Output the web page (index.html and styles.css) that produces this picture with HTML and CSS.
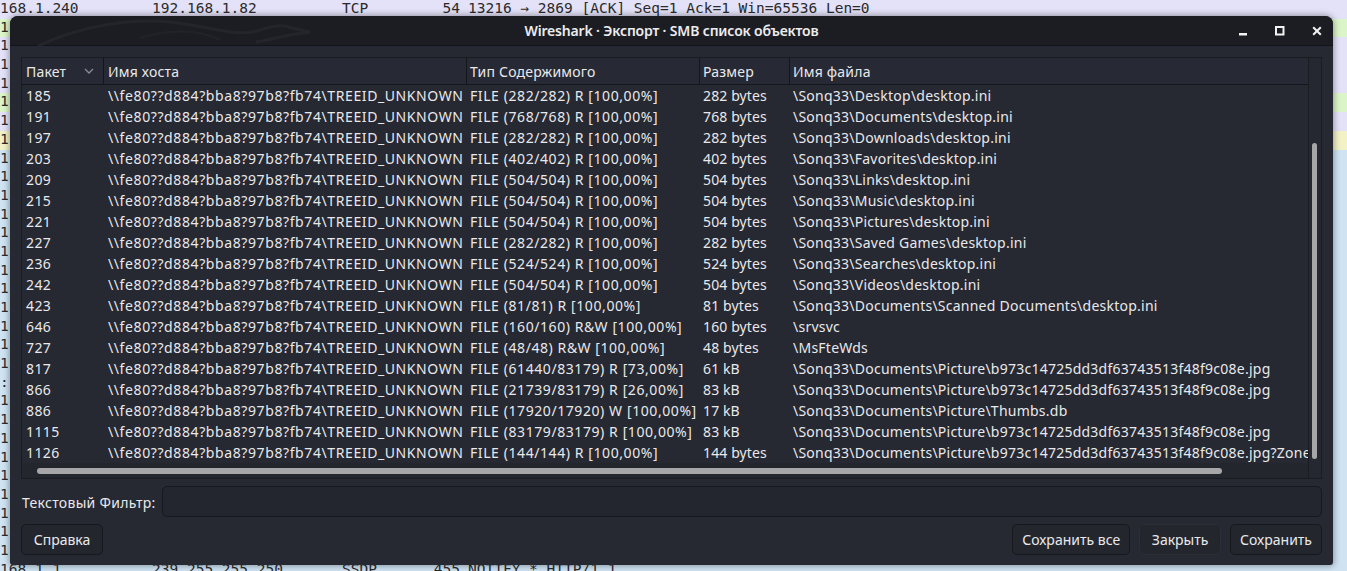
FILE: index.html
```html
<!DOCTYPE html>
<html lang="ru">
<head>
<meta charset="utf-8">
<title>Wireshark · Экспорт · SMB список объектов</title>
<link rel="stylesheet" href="styles.css">
</head>
<body>
<div class="pktlist">
  <div class="pkt lav"><span class="c1">168.1.240</span><span class="c2">192.168.1.82</span><span class="c3">TCP</span><span class="c4">54</span><span class="c5">13216 → 2869 [ACK] Seq=1 Ack=1 Win=65536 Len=0</span></div>
  <div class="pkt grn"><span class="c1">1</span></div>
  <div class="pkt lav"><span class="c1">1</span></div>
  <div class="pkt lav"><span class="c1">1</span></div>
  <div class="pkt lav"><span class="c1">1</span></div>
  <div class="pkt grn"><span class="c1">1</span></div>
  <div class="pkt lav"><span class="c1">1</span></div>
  <div class="pkt yel"><span class="c1">1</span></div>
  <div class="pkt blu"><span class="c1">1</span></div>
  <div class="pkt blu"><span class="c1">1</span></div>
  <div class="pkt blu"><span class="c1">1</span></div>
  <div class="pkt blu"><span class="c1">1</span></div>
  <div class="pkt blu"><span class="c1">1</span></div>
  <div class="pkt blu"><span class="c1">1</span></div>
  <div class="pkt blu"><span class="c1">1</span></div>
  <div class="pkt blu"><span class="c1">1</span></div>
  <div class="pkt blu"><span class="c1">1</span></div>
  <div class="pkt blu"><span class="c1">1</span></div>
  <div class="pkt blu"><span class="c1">1</span></div>
  <div class="pkt blu"><span class="c1">1</span></div>
  <div class="pkt blu"><span class="c1">:</span></div>
  <div class="pkt blu"><span class="c1">1</span></div>
  <div class="pkt blu"><span class="c1">1</span></div>
  <div class="pkt blu"><span class="c1">1</span></div>
  <div class="pkt blu"><span class="c1">1</span></div>
  <div class="pkt blu"><span class="c1">1</span></div>
  <div class="pkt blu"><span class="c1">1</span></div>
  <div class="pkt blu"><span class="c1">1</span></div>
  <div class="pkt blu"><span class="c1">1</span></div>
  <div class="pkt blu"><span class="c1">1</span></div>
  <div class="pkt blu"><span class="c1">168.1.1</span><span class="c2">239.255.255.250</span><span class="c3">SSDP</span><span class="c4">455</span><span class="c5">NOTIFY * HTTP/1.1</span></div>
</div>

<div class="win">
  <div class="titlebar">
    <svg class="dragon" width="320" height="30" viewBox="0 0 320 30"><path d="M18 30 C60 10 110 2 150 6 C190 10 215 22 240 14 C252 10 262 8 272 12 L290 16 L276 18 C262 20 250 24 236 26" fill="none" stroke="#24252b" stroke-width="3"/><path d="M120 22 C150 12 180 14 200 24" fill="none" stroke="#222329" stroke-width="2"/></svg>
    <div class="title">Wireshark · Экспорт · SMB список объектов</div>
    <div class="controls">
      <svg class="ctl" width="14" height="14" viewBox="0 0 14 14"><rect x="3" y="9" width="8" height="2.5" fill="#f2f2f2"/></svg>
      <svg class="ctl" width="14" height="14" viewBox="0 0 14 14"><rect x="3" y="3" width="7.5" height="7.5" fill="none" stroke="#f2f2f2" stroke-width="2"/></svg>
      <svg class="ctl" width="14" height="14" viewBox="0 0 14 14"><path d="M3.2 3.2 L10.8 10.8 M10.8 3.2 L3.2 10.8" stroke="#f2f2f2" stroke-width="2"/></svg>
    </div>
  </div>

  <div class="body">
    <div class="tree">
      <div class="viewport">
        <div class="hdr">
          <div class="h c0">Пакет<svg class="sort" width="10" height="6" viewBox="0 0 10 6"><path d="M1 1 L5 5 L9 1" fill="none" stroke="#8a8c95" stroke-width="1.3"/></svg></div>
          <div class="h c1">Имя хоста</div>
          <div class="h c2">Тип Содержимого</div>
          <div class="h c3">Размер</div>
          <div class="h c4">Имя файла</div>
        </div>
        <div class="rows">
          <div class="row"><div class="c0">185</div><div class="c1">\\fe80??d884?bba8?97b8?fb74\TREEID_UNKNOWN</div><div class="c2">FILE (282/282) R [100,00%]</div><div class="c3">282 bytes</div><div class="c4">\Sonq33\Desktop\desktop.ini</div></div>
          <div class="row"><div class="c0">191</div><div class="c1">\\fe80??d884?bba8?97b8?fb74\TREEID_UNKNOWN</div><div class="c2">FILE (768/768) R [100,00%]</div><div class="c3">768 bytes</div><div class="c4">\Sonq33\Documents\desktop.ini</div></div>
          <div class="row"><div class="c0">197</div><div class="c1">\\fe80??d884?bba8?97b8?fb74\TREEID_UNKNOWN</div><div class="c2">FILE (282/282) R [100,00%]</div><div class="c3">282 bytes</div><div class="c4">\Sonq33\Downloads\desktop.ini</div></div>
          <div class="row"><div class="c0">203</div><div class="c1">\\fe80??d884?bba8?97b8?fb74\TREEID_UNKNOWN</div><div class="c2">FILE (402/402) R [100,00%]</div><div class="c3">402 bytes</div><div class="c4">\Sonq33\Favorites\desktop.ini</div></div>
          <div class="row"><div class="c0">209</div><div class="c1">\\fe80??d884?bba8?97b8?fb74\TREEID_UNKNOWN</div><div class="c2">FILE (504/504) R [100,00%]</div><div class="c3">504 bytes</div><div class="c4">\Sonq33\Links\desktop.ini</div></div>
          <div class="row"><div class="c0">215</div><div class="c1">\\fe80??d884?bba8?97b8?fb74\TREEID_UNKNOWN</div><div class="c2">FILE (504/504) R [100,00%]</div><div class="c3">504 bytes</div><div class="c4">\Sonq33\Music\desktop.ini</div></div>
          <div class="row"><div class="c0">221</div><div class="c1">\\fe80??d884?bba8?97b8?fb74\TREEID_UNKNOWN</div><div class="c2">FILE (504/504) R [100,00%]</div><div class="c3">504 bytes</div><div class="c4">\Sonq33\Pictures\desktop.ini</div></div>
          <div class="row"><div class="c0">227</div><div class="c1">\\fe80??d884?bba8?97b8?fb74\TREEID_UNKNOWN</div><div class="c2">FILE (282/282) R [100,00%]</div><div class="c3">282 bytes</div><div class="c4">\Sonq33\Saved Games\desktop.ini</div></div>
          <div class="row"><div class="c0">236</div><div class="c1">\\fe80??d884?bba8?97b8?fb74\TREEID_UNKNOWN</div><div class="c2">FILE (524/524) R [100,00%]</div><div class="c3">524 bytes</div><div class="c4">\Sonq33\Searches\desktop.ini</div></div>
          <div class="row"><div class="c0">242</div><div class="c1">\\fe80??d884?bba8?97b8?fb74\TREEID_UNKNOWN</div><div class="c2">FILE (504/504) R [100,00%]</div><div class="c3">504 bytes</div><div class="c4">\Sonq33\Videos\desktop.ini</div></div>
          <div class="row"><div class="c0">423</div><div class="c1">\\fe80??d884?bba8?97b8?fb74\TREEID_UNKNOWN</div><div class="c2">FILE (81/81) R [100,00%]</div><div class="c3">81 bytes</div><div class="c4">\Sonq33\Documents\Scanned Documents\desktop.ini</div></div>
          <div class="row"><div class="c0">646</div><div class="c1">\\fe80??d884?bba8?97b8?fb74\TREEID_UNKNOWN</div><div class="c2">FILE (160/160) R&amp;W [100,00%]</div><div class="c3">160 bytes</div><div class="c4">\srvsvc</div></div>
          <div class="row"><div class="c0">727</div><div class="c1">\\fe80??d884?bba8?97b8?fb74\TREEID_UNKNOWN</div><div class="c2">FILE (48/48) R&amp;W [100,00%]</div><div class="c3">48 bytes</div><div class="c4">\MsFteWds</div></div>
          <div class="row"><div class="c0">817</div><div class="c1">\\fe80??d884?bba8?97b8?fb74\TREEID_UNKNOWN</div><div class="c2">FILE (61440/83179) R [73,00%]</div><div class="c3">61 kB</div><div class="c4">\Sonq33\Documents\Picture\b973c14725dd3df63743513f48f9c08e.jpg</div></div>
          <div class="row"><div class="c0">866</div><div class="c1">\\fe80??d884?bba8?97b8?fb74\TREEID_UNKNOWN</div><div class="c2">FILE (21739/83179) R [26,00%]</div><div class="c3">83 kB</div><div class="c4">\Sonq33\Documents\Picture\b973c14725dd3df63743513f48f9c08e.jpg</div></div>
          <div class="row"><div class="c0">886</div><div class="c1">\\fe80??d884?bba8?97b8?fb74\TREEID_UNKNOWN</div><div class="c2">FILE (17920/17920) W [100,00%]</div><div class="c3">17 kB</div><div class="c4">\Sonq33\Documents\Picture\Thumbs.db</div></div>
          <div class="row"><div class="c0">1115</div><div class="c1">\\fe80??d884?bba8?97b8?fb74\TREEID_UNKNOWN</div><div class="c2">FILE (83179/83179) R [100,00%]</div><div class="c3">83 kB</div><div class="c4">\Sonq33\Documents\Picture\b973c14725dd3df63743513f48f9c08e.jpg</div></div>
          <div class="row"><div class="c0">1126</div><div class="c1">\\fe80??d884?bba8?97b8?fb74\TREEID_UNKNOWN</div><div class="c2">FILE (144/144) R [100,00%]</div><div class="c3">144 bytes</div><div class="c4">\Sonq33\Documents\Picture\b973c14725dd3df63743513f48f9c08e.jpg?Zone.Identifier</div></div>
        </div>
        <div class="hscroll"><div class="hthumb"></div></div>
      </div>
      <div class="vscroll"><div class="vthumb"></div></div>
    </div>

    <div class="filter">
      <label class="flabel">Текстовый Фильтр:</label>
      <div class="finput"></div>
    </div>

    <div class="buttons">
      <div class="btn">Справка</div>
      <div class="spacer"></div>
      <div class="btn">Сохранить все</div>
      <div class="btn focus">Закрыть</div>
      <div class="btn">Сохранить</div>
    </div>
  </div>
</div>
</body>
</html>
```

FILE: styles.css
```css
html, body {
  margin: 0;
  padding: 0;
  width: 1347px;
  height: 571px;
  overflow: hidden;
}
body {
  position: relative;
  background: #cfe3f3;
}

/* background packet list */
.pktlist {
  display: flex;
  flex-direction: column;
  font-family: "DejaVu Sans Mono", monospace;
  font-size: 14.5px;
  color: #2b2b2b;
}
.pkt {
  height: 18.7px;
  line-height: 16px;
  display: grid;
  grid-template-columns: 152px 190px 88px 30px 1fr;
  white-space: nowrap;
  overflow: hidden;
}
.pkt .c4 { text-align: right; }
.pkt .c5 { padding-left: 8px; }
.lav { background: #e4e2f8; }
.grn { background: #dcf5c8; }
.yel { background: #f3f1c6; }
.blu { background: #cfe3f3; }

/* dialog window */
.win {
  position: absolute;
  left: 10px;
  top: 16px;
  width: 1323px;
  height: 549px;
  background: #262832;
  border-radius: 8px 8px 3px 3px;
  box-shadow: 0 0 6px 1px rgba(0, 0, 0, 0.35);
  display: flex;
  flex-direction: column;
  overflow: hidden;
  font-family: "Noto Sans", sans-serif;
  font-size: 14px;
  color: #e9e9ec;
}

.titlebar {
  height: 29px;
  border-bottom: 1px solid #131419;
  background: #1c1d22;
  position: relative;
  display: flex;
  align-items: center;
  justify-content: center;
}
.dragon {
  position: absolute;
  left: 10px;
  top: 0;
}
.title {
  font-weight: 600;
  font-size: 14px;
  letter-spacing: -0.17px;
  color: #ececef;
  position: relative;
  left: 0;
}
.controls {
  position: absolute;
  right: 9px;
  top: 8px;
  display: flex;
  gap: 23px;
}
.ctl { display: block; }

.body {
  flex: 1;
  display: flex;
  flex-direction: column;
  padding: 11px 11px 0 11px;
}

/* tree view */
.tree {
  height: 420px;
  border: 1px solid #1b1c22;
  display: flex;
}
.viewport {
  width: 1286px;
  display: flex;
  flex-direction: column;
  overflow: hidden;
}
.hdr {
  height: 26px;
  border-bottom: 1px solid #15161b;
  display: grid;
  grid-template-columns: 82px 363px 233px 90px 518px;
  background: #272934;
}
.h {
  border-right: 1px solid #15161b;
  padding-left: 4px;
  padding-top: 1px;
  letter-spacing: 0.2px;
  white-space: nowrap;
  overflow: hidden;
  display: flex;
  align-items: center;
}
.h.c4 { border-right: none; }
.h.c2, .h.c3, .h.c4 { padding-left: 3px; }
.sort { margin-left: auto; margin-right: 9px; margin-top: -2px; }

.rows { height: 378px; }
.row {
  height: 21px;
  line-height: 21px;
  display: grid;
  grid-template-columns: 82px 363px 233px 90px 518px;
  white-space: nowrap;
}
.row > div { overflow: hidden; padding-left: 4px; }
.row .c2, .row .c3, .row .c4 { padding-left: 3px; }
.row .c0 { letter-spacing: 0.4px; }
.row .c1 { letter-spacing: 0.6px; }
.row .c2 { letter-spacing: 0.58px; }
.row .c3 { letter-spacing: 0.12px; }
.row .c4 { letter-spacing: 0.24px; }

.hscroll {
  height: 15px;
  background: #24262e;
  padding-top: 5px;
  box-sizing: border-box;
}
.hthumb {
  margin-left: 15px;
  width: 1185px;
  height: 6px;
  border-radius: 3px;
  background: #a6a6a8;
}

.vscroll {
  width: 12px;
  border-left: 1px solid #1b1c22;
  background: #262831;
}
.vthumb {
  margin-top: 85px;
  margin-left: 3px;
  width: 5px;
  height: 316px;
  border-radius: 3px;
  background: #a6a6a8;
}

/* filter */
.filter {
  margin-top: 7px;
  height: 31px;
  display: flex;
  align-items: center;
}
.flabel {
  width: 140px;
  padding-left: 1px;
  padding-top: 2px;
  letter-spacing: 0.3px;
}
.finput {
  flex: 1;
  height: 29px;
  border: 1px solid #17181d;
  border-radius: 5px;
  background: #24262f;
}

/* buttons */
.buttons {
  margin-top: 7px;
  display: flex;
  gap: 9px;
}
.spacer { flex: 1; }
.btn {
  box-sizing: border-box;
  min-width: 82px;
  height: 31px;
  line-height: 29px;
  border: 1px solid #17181d;
  border-radius: 5px;
  padding: 0 9px;
  background: #24262e;
  text-align: center;
  white-space: nowrap;
}
.btn.focus {
  border-color: #2c2e36;
}
```
